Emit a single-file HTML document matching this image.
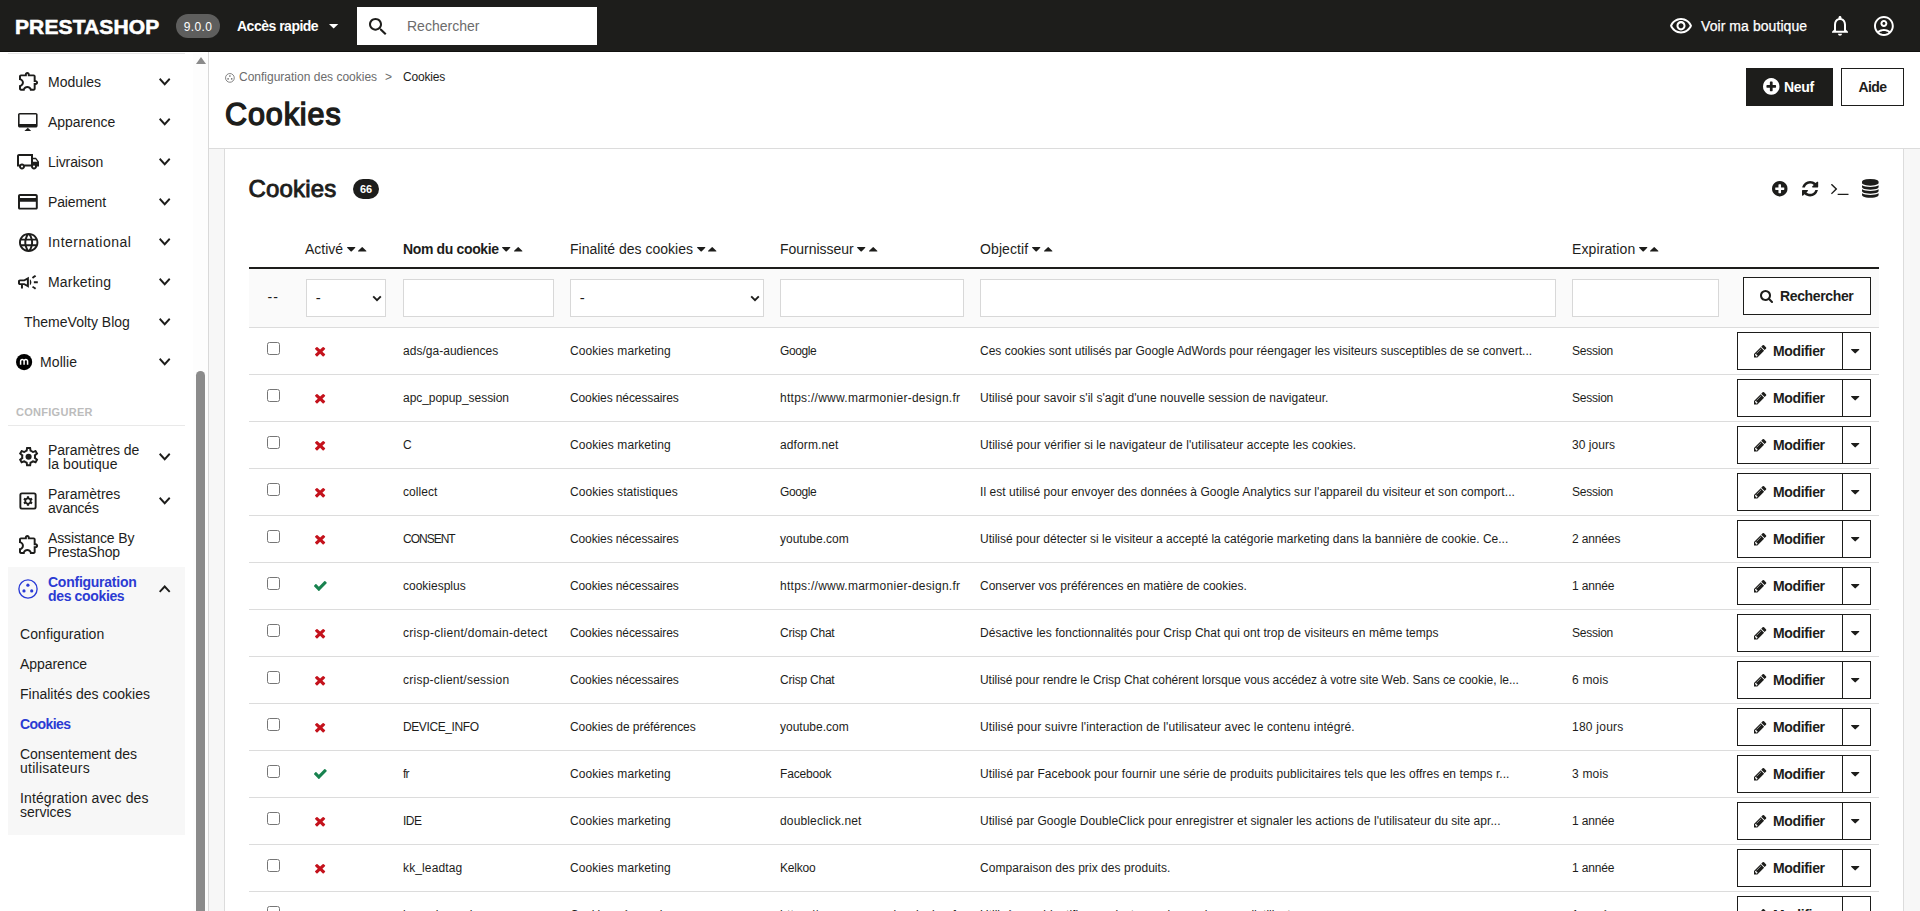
<!DOCTYPE html><html lang="fr"><head><meta charset="utf-8"><title>Cookies</title><style>*{box-sizing:border-box}
html,body{margin:0;padding:0}
body{width:1920px;height:911px;overflow:hidden;background:#f7f7f7;font-family:"Liberation Sans",sans-serif;color:#1d1d1b;position:relative}
svg{display:block}
.fa,.mi{overflow:visible}
svg.ic{position:absolute;overflow:visible}
#hdr{position:absolute;left:0;top:0;width:1920px;height:52px;background:#1d1d1b;color:#fff;border-bottom:1px solid #10100e;z-index:3}
.logo{position:absolute;left:15px;top:15px;font-size:21px;line-height:24px;font-weight:bold;-webkit-text-stroke:0.6px #fff}
.ver{position:absolute;left:176px;top:14px;width:44px;height:24px;border-radius:12px;background:#5e5e5d;font-size:12px;line-height:26px;letter-spacing:0.35px;text-align:center;color:#fff}
.quick{position:absolute;left:237px;top:14px;font-size:14px;line-height:24px;font-weight:bold}
.sbox{position:absolute;left:357px;top:7px;width:240px;height:38px;background:#fff}
.sbox .ph{position:absolute;left:50px;top:7px;font-size:14px;line-height:24px;color:#6c6c6c}
.voir{position:absolute;left:1701px;top:14px;font-size:14px;line-height:24px;-webkit-text-stroke:0.25px #fff}
#side{position:absolute;left:0;top:52px;width:209px;height:859px;background:#fff;border-right:1px solid #d9d9d9}
#side svg{position:absolute}
.topline{position:absolute;left:8px;top:1px;width:177px;height:1px;background:#e6e6e6}
.nl{position:absolute;font-size:14px;line-height:14px;white-space:nowrap;color:#1d1d1b}
.nl.act{color:#2b3bd3;font-weight:bold}
.sect{position:absolute;left:16px;top:353px;font-size:11px;line-height:14px;font-weight:bold;color:#bcbcbc}
.sline{position:absolute;left:8px;top:373px;width:177px;height:1px;background:#e9e9e9}
.actbg{position:absolute;left:8px;top:515px;width:177px;height:268px;background:#f7f7f7}
.track{position:absolute;left:193px;top:1px;width:15px;height:858px;background:#fdfdfd}
.uparrow{position:absolute;left:195.500px;top:5px;width:0;height:0;border-left:5px solid transparent;border-right:5px solid transparent;border-bottom:7px solid #8b8b8b}
.thumb{position:absolute;left:196px;top:319px;width:9px;height:600px;border-radius:4.500px;background:#8b8b8b}
#phead{position:absolute;left:209px;top:52px;width:1711px;height:97px;z-index:2;background:#fff;border-bottom:1px solid #dcdcdc}
.bc1,.bcs,.bc2{position:absolute;top:18px;font-size:12px;line-height:14px;white-space:nowrap}
.bc1{left:30px;color:#6c6c6c}
.bcs{left:176px;color:#6c6c6c}
.bc2{left:194px;color:#1d1d1b}
h1{position:absolute;left:16px;top:42px;margin:0;font-size:30.5px;line-height:40px;font-weight:normal;-webkit-text-stroke:1.4px #1d1d1b}
.bneuf{position:absolute;left:1537px;top:16px;width:87px;height:38px;background:#1d1d1b;color:#fff;font-weight:bold;font-size:14px}
.bneuf>span{position:absolute;left:38px;top:11px;line-height:16px}
.baide{position:absolute;left:1632px;top:16px;width:63px;height:38px;border:1px solid #1d1d1b;background:#fff;font-weight:bold;font-size:14px;line-height:36px;text-align:center}
#card{position:absolute;left:224px;top:148px;width:1680px;height:800px;background:#fff;border-left:1px solid #dcdcdc;border-right:1px solid #dcdcdc}
#card>svg{position:absolute}
.ctitle{position:absolute;left:23.500px;top:26px;font-size:24px;line-height:30px;font-weight:normal;-webkit-text-stroke:0.9px #1d1d1b}
.cbadge{position:absolute;left:128px;top:31px;width:26px;height:20px;border-radius:10px;background:#1d1d1b;color:#fff;font-size:11px;line-height:20px;font-weight:bold;text-align:center}
.th{position:absolute;top:92px;font-size:14px;line-height:18px;white-space:nowrap}
.th.b{font-weight:bold}
.hline{position:absolute;left:24px;top:119px;width:1630px;height:2px;background:#1d1d1b}
.frow{position:absolute;left:24px;top:121px;width:1630px;height:59px;background:#fafafa;border-bottom:1px solid #dcdcdc}
.dd{position:absolute;left:42.500px;top:141px;font-size:14px;line-height:16px;letter-spacing:1.2px}
.inp{position:absolute;top:131px;height:38px;border:1px solid #d8d8d8;background:#fff;box-sizing:content-box;height:36px}
.inp .dash{position:absolute;left:8.800px;top:10px;font-size:15px;line-height:16px}
.brech{position:absolute;left:1518px;top:129px;width:128px;height:38px;border:1px solid #1d1d1b;background:#fff;font-weight:bold;font-size:14px}
.brech>span{position:absolute;left:36px;top:10px;line-height:16px}
.brech svg,.bmod svg{position:absolute}
.row{position:absolute;left:24px;width:1630px;height:47px;border-bottom:1px solid #dcdcdc}
.row>svg{position:absolute}
.cb{position:absolute;left:18px;top:14px;width:13px;height:13px;border:1px solid #767676;border-radius:2.500px;background:#fff}
.td{position:absolute;top:16px;font-size:12px;line-height:14px;white-space:nowrap}
.bmod{position:absolute;left:1488px;top:4px;width:134px;height:38px;border:1px solid #1d1d1b;background:#fff;font-weight:bold;font-size:14px}
.bmod>span{position:absolute;left:35px;top:10px;line-height:16px}
.bdiv{position:absolute;left:104px;top:0;width:1px;height:36px;background:#1d1d1b}
</style></head><body>
<div id="hdr">
<div class="logo"><span id="t1" style="letter-spacing:0.111px">PRESTASHOP</span></div>
<div class="ver"><span id="t2">9.0.0</span></div>
<div class="quick"><span id="t3" style="letter-spacing:-0.500px">Accès rapide</span></div><svg class="ic" viewBox="7 10 10 5" preserveAspectRatio="none" style="left:329.00px;top:24.00px;width:9.30px;height:4.60px"><path fill="#fff" d="M7 10l5 5 5-5z"/></svg>
<div class="sbox"><svg class="ic" viewBox="3 3 17.49 17.49" preserveAspectRatio="none" style="left:11.75px;top:10.50px;width:17.50px;height:17.00px"><path fill="#1d1d1b" d="M15.500 14h-.79l-.28-.27C15.410 12.590 16 11.110 16 9.500 16 5.910 13.090 3 9.500 3S3 5.910 3 9.500 5.910 16 9.500 16c1.610 0 3.090-.59 4.230-1.570l.27.28v.79l5 4.990L20.490 19l-4.990-5zm-6 0C7.010 14 5 11.990 5 9.500S7.010 5 9.500 5 14 7.010 14 9.500 11.990 14 9.500 14z"/></svg><span class="ph"><span id="t4">Rechercher</span></span></div>
<svg class="ic" viewBox="1 4 22 15" preserveAspectRatio="none" style="left:1670.00px;top:17.50px;width:22.00px;height:15.50px"><path fill="#fff" d="M12 6c3.790 0 7.170 2.130 8.820 5.500C19.170 14.870 15.790 17 12 17s-7.170-2.130-8.820-5.500C4.830 8.130 8.210 6 12 6m0-2C7 4 2.730 7.110 1 11.500 2.730 15.890 7 19 12 19s9.270-3.110 11-7.500C21.270 7.110 17 4 12 4zm0 5c1.380 0 2.500 1.120 2.500 2.500S13.380 14 12 14s-2.500-1.120-2.500-2.500S10.620 9 12 9m0-2c-2.480 0-4.500 2.020-4.500 4.500S9.520 16 12 16s4.500-2.020 4.500-4.500S14.480 7 12 7z"/></svg>
<div class="voir"><span id="t5" style="letter-spacing:0.067px">Voir ma boutique</span></div>
<svg class="ic" viewBox="4 2.5 16 19.5" preserveAspectRatio="none" style="left:1832.00px;top:16.00px;width:16.00px;height:19.80px"><path fill="#fff" d="M12 22c1.100 0 2-.9 2-2h-4c0 1.100.9 2 2 2zm6-6v-5c0-3.070-1.630-5.640-4.500-6.320V4c0-.83-.67-1.500-1.500-1.500s-1.500.67-1.500 1.500v.68C7.640 5.360 6 7.920 6 11v5l-2 2v1h16v-1l-2-2zm-2 1H8v-6c0-2.480 1.510-4.500 4-4.500s4 2.020 4 4.500v6z"/></svg>
<svg class="ic" viewBox="2 2 20 20" preserveAspectRatio="none" style="left:1874.20px;top:16.00px;width:19.80px;height:19.90px"><path fill="#fff" d="M12 2C6.480 2 2 6.480 2 12s4.480 10 10 10 10-4.480 10-10S17.520 2 12 2zM7.350 18.500C8.660 17.560 10.260 17 12 17s3.340.56 4.650 1.500C15.340 19.440 13.740 20 12 20s-3.340-.56-4.650-1.500zm10.790-1.380C16.450 15.800 14.320 15 12 15s-4.450.8-6.140 2.120C4.700 15.730 4 13.950 4 12c0-4.420 3.580-8 8-8s8 3.580 8 8c0 1.950-.7 3.730-1.860 5.120zM12 6c-1.930 0-3.500 1.570-3.500 3.500S10.070 13 12 13s3.500-1.570 3.500-3.500S13.930 6 12 6zm0 5c-.83 0-1.500-.67-1.500-1.500S11.170 8 12 8s1.500.67 1.500 1.500S12.830 11 12 11z"/></svg>
</div>
<div id="side"><div class="topline"></div><svg class="ic" viewBox="2 2.5 19.5 19.5" preserveAspectRatio="none" style="left:19.00px;top:20.20px;width:19.10px;height:18.80px"><path fill="#1d1d1b" d="M10.5 4.5c.28 0 .5.22.5.5v2h6v6h2c.28 0 .5.22.5.5s-.22.5-.5.5h-2v6h-2.120c-.680-1.750-2.390-3-4.380-3s-3.700 1.250-4.380 3H4v-2.120c1.750-.680 3-2.390 3-4.380 0-1.990-1.240-3.700-2.990-4.380L4 7h6V5c0-.280.220-.5.5-.5m0-2C9.120 2.500 8 3.620 8 5H4c-1.100 0-1.990.9-1.990 2v3.800h.29c1.490 0 2.700 1.210 2.700 2.700s-1.210 2.700-2.700 2.700H2V20c0 1.100.9 2 2 2h3.800v-.3c0-1.490 1.210-2.700 2.700-2.700s2.700 1.210 2.700 2.700v.3H17c1.100 0 2-.9 2-2v-4c1.380 0 2.500-1.120 2.500-2.500S20.380 11 19 11V7c0-1.100-.9-2-2-2h-4c0-1.380-1.120-2.500-2.500-2.500z"/></svg><div class="nl " style="left:48px;top:23px"><span id="t6" style="letter-spacing:0.033px">Modules</span></div><svg class="ic" viewBox="6 8.59 12 7.41" preserveAspectRatio="none" style="left:159.30px;top:25.80px;width:11.40px;height:7.80px"><path fill="#1d1d1b" d="M16.590 8.590L12 13.170 7.410 8.590 6 10l6 6 6-6z"/></svg><svg class="ic" viewBox="0 0 19.6 18" style="left:18.3px;top:60.90px;width:19.6px;height:18px"><path fill="#1d1d1b" fill-rule="evenodd" d="M1.800 0h16c1 0 1.800.8 1.800 1.800v10.900c0 1-.8 1.800-1.800 1.800h-16c-1 0-1.800-.8-1.800-1.800V1.800C0 .8.800 0 1.800 0zM1.600 1.600v9.300h16.400V1.600zM9.800 14.700l3.400 3.300h-6.800z"/></svg><div class="nl " style="left:48px;top:63px"><span id="t7" style="letter-spacing:-0.062px">Apparence</span></div><svg class="ic" viewBox="6 8.59 12 7.41" preserveAspectRatio="none" style="left:159.30px;top:65.80px;width:11.40px;height:7.80px"><path fill="#1d1d1b" d="M16.590 8.590L12 13.170 7.410 8.590 6 10l6 6 6-6z"/></svg><svg class="ic" viewBox="1 4 22 16" preserveAspectRatio="none" style="left:17.00px;top:102.30px;width:22.00px;height:15.40px"><path fill="#1d1d1b" d="M20 8h-3V4H3c-1.100 0-2 .9-2 2v11h2c0 1.660 1.340 3 3 3s3-1.340 3-3h6c0 1.660 1.340 3 3 3s3-1.340 3-3h2v-5l-3-4zm-.5 1.500l1.960 2.500H17V9.500h2.500zM6 18c-.55 0-1-.45-1-1s.45-1 1-1 1 .45 1 1-.45 1-1 1zm2.220-3c-.55-.61-1.330-1-2.220-1s-1.670.39-2.220 1H3V6h12v9H8.220zM18 18c-.55 0-1-.45-1-1s.45-1 1-1 1 .45 1 1-.45 1-1 1z"/></svg><div class="nl " style="left:48px;top:103px"><span id="t8" style="letter-spacing:-0.100px">Livraison</span></div><svg class="ic" viewBox="6 8.59 12 7.41" preserveAspectRatio="none" style="left:159.30px;top:105.80px;width:11.40px;height:7.80px"><path fill="#1d1d1b" d="M16.590 8.590L12 13.170 7.410 8.590 6 10l6 6 6-6z"/></svg><svg class="ic" viewBox="2 4 20 16" preserveAspectRatio="none" style="left:18.30px;top:142.00px;width:19.80px;height:15.60px"><path fill="#1d1d1b" d="M20 4H4c-1.110 0-1.990.89-1.990 2L2 18c0 1.110.89 2 2 2h16c1.110 0 2-.89 2-2V6c0-1.110-.89-2-2-2zm0 14H4v-6h16v6zm0-10H4V6h16v2z"/></svg><div class="nl " style="left:48px;top:143px"><span id="t9" style="letter-spacing:-0.143px">Paiement</span></div><svg class="ic" viewBox="6 8.59 12 7.41" preserveAspectRatio="none" style="left:159.30px;top:145.80px;width:11.40px;height:7.80px"><path fill="#1d1d1b" d="M16.590 8.590L12 13.170 7.410 8.590 6 10l6 6 6-6z"/></svg><svg class="ic" viewBox="2 2 20 20" preserveAspectRatio="none" style="left:18.50px;top:180.50px;width:19.40px;height:18.90px"><path fill="#1d1d1b" d="M11.990 2C6.470 2 2 6.480 2 12s4.470 10 9.990 10C17.520 22 22 17.520 22 12S17.520 2 11.990 2zm6.930 6h-2.950c-.32-1.250-.78-2.450-1.380-3.560 1.840.63 3.370 1.910 4.330 3.560zM12 4.040c.83 1.200 1.480 2.530 1.910 3.960h-3.820c.43-1.430 1.080-2.760 1.910-3.960zM4.260 14C4.100 13.360 4 12.690 4 12s.1-1.360.26-2h3.380c-.08.66-.14 1.320-.14 2 0 .68.06 1.340.14 2H4.260zm.82 2h2.950c.32 1.250.78 2.450 1.380 3.560-1.840-.63-3.370-1.900-4.330-3.560zm2.950-8H5.080c.96-1.660 2.490-2.930 4.330-3.560C8.810 5.550 8.350 6.750 8.030 8zM12 19.960c-.83-1.200-1.480-2.530-1.910-3.960h3.820c-.43 1.430-1.080 2.760-1.910 3.960zM14.340 14H9.660c-.09-.66-.16-1.320-.16-2 0-.68.07-1.350.16-2h4.680c.09.65.16 1.320.16 2 0 .68-.07 1.340-.16 2zm.25 5.560c.6-1.110 1.060-2.310 1.380-3.560h2.950c-.96 1.650-2.490 2.930-4.330 3.560zM16.360 14c.08-.66.14-1.320.14-2 0-.68-.06-1.340-.14-2h3.380c.16.64.26 1.310.26 2s-.1 1.360-.26 2h-3.380z"/></svg><div class="nl " style="left:48px;top:183px"><span id="t10" style="letter-spacing:0.479px">International</span></div><svg class="ic" viewBox="6 8.59 12 7.41" preserveAspectRatio="none" style="left:159.30px;top:185.80px;width:11.40px;height:7.80px"><path fill="#1d1d1b" d="M16.590 8.590L12 13.170 7.410 8.590 6 10l6 6 6-6z"/></svg><svg class="ic" viewBox="2 4 20 16" preserveAspectRatio="none" style="left:18.30px;top:222.70px;width:19.80px;height:14.50px"><path fill="#1d1d1b" d="M18 11c0 .67 0 1.330 0 2 1.200 0 2.760 0 4 0 0-.67 0-1.330 0-2-1.240 0-2.800 0-4 0zM16 17.610c.96.71 2.210 1.650 3.200 2.390.4-.53.8-1.070 1.200-1.600-.99-.74-2.240-1.680-3.200-2.400-.4.54-.8 1.080-1.200 1.610zM20.400 5.600c-.4-.53-.8-1.070-1.200-1.600-.99.74-2.240 1.680-3.200 2.400.4.530.8 1.070 1.200 1.600.96-.72 2.210-1.650 3.200-2.400zM4 9c-1.100 0-2 .9-2 2v2c0 1.100.9 2 2 2h1v4h2v-4h1l5 3V6L8 9H4zm5.030 1.710L11 9.530v4.940l-1.970-1.180-.48-.29H4v-2h4.550l.48-.29zM15.500 12c0-1.330-.58-2.530-1.500-3.350v6.690c.92-.81 1.500-2.010 1.500-3.340z"/></svg><div class="nl " style="left:48px;top:223px"><span id="t11" style="letter-spacing:0.188px">Marketing</span></div><svg class="ic" viewBox="6 8.59 12 7.41" preserveAspectRatio="none" style="left:159.30px;top:225.80px;width:11.40px;height:7.80px"><path fill="#1d1d1b" d="M16.590 8.590L12 13.170 7.410 8.590 6 10l6 6 6-6z"/></svg><div class="nl " style="left:24px;top:263px"><span id="t12">ThemeVolty Blog</span></div><svg class="ic" viewBox="6 8.59 12 7.41" preserveAspectRatio="none" style="left:159.30px;top:265.80px;width:11.40px;height:7.80px"><path fill="#1d1d1b" d="M16.590 8.590L12 13.170 7.410 8.590 6 10l6 6 6-6z"/></svg><svg class="ic" viewBox="0 0 16.2 16.2" style="left:15.9px;top:301.8px;width:16.2px;height:16.2px"><circle cx="8.1" cy="8.1" r="8.1" fill="#000"/><path d="M4.600 10.700V7.300a1.750 1.750 0 0 1 3.500 0V10.700M8.100 7.300a1.750 1.750 0 0 1 3.500 0V10.700" fill="none" stroke="#fff" stroke-width="1.500"/></svg><div class="nl " style="left:40px;top:303px"><span id="t13" style="letter-spacing:0.100px">Mollie</span></div><svg class="ic" viewBox="6 8.59 12 7.41" preserveAspectRatio="none" style="left:159.30px;top:305.80px;width:11.40px;height:7.80px"><path fill="#1d1d1b" d="M16.590 8.590L12 13.170 7.410 8.590 6 10l6 6 6-6z"/></svg><div class="sect"><span id="t14" style="letter-spacing:0.278px">CONFIGURER</span></div><div class="sline"></div><svg class="ic" viewBox="2.27 2 19.45 20" preserveAspectRatio="none" style="left:18.5px;top:395.10px;width:19.2px;height:19.3px"><path fill="#1d1d1b" d="M19.430 12.980c.04-.32.07-.64.07-.98 0-.34-.03-.66-.07-.98l2.110-1.650c.19-.15.24-.42.12-.64l-2-3.460c-.09-.16-.26-.25-.44-.25-.06 0-.12.010-.17.030l-2.490 1c-.52-.4-1.080-.73-1.690-.98l-.38-2.650C14.460 2.180 14.250 2 14 2h-4c-.25 0-.46.18-.49.42l-.38 2.650c-.61.25-1.170.59-1.690.98l-2.490-1c-.06-.02-.12-.03-.18-.03-.17 0-.34.09-.43.25l-2 3.460c-.13.22-.07.49.12.64l2.110 1.650c-.04.32-.07.65-.07.98 0 .33.03.66.07.98l-2.110 1.650c-.19.15-.24.42-.12.64l2 3.460c.09.16.26.25.44.25.06 0 .12-.01.17-.03l2.490-1c.52.4 1.080.73 1.690.98l.38 2.650c.03.24.24.42.49.42h4c.25 0 .46-.18.49-.42l.38-2.650c.61-.25 1.170-.59 1.690-.98l2.490 1c.06.02.12.03.18.03.17 0 .34-.09.43-.25l2-3.460c.12-.22.07-.49-.12-.64l-2.110-1.650zm-1.980-1.710c.04.31.05.52.05.73 0 .21-.02.43-.05.73l-.14 1.130.89.7 1.080.84-.7 1.210-1.270-.51-1.040-.42-.9.68c-.43.32-.84.56-1.250.73l-1.060.43-.16 1.130-.2 1.350h-1.400l-.19-1.350-.16-1.130-1.060-.43c-.43-.18-.83-.41-1.230-.71l-.91-.7-1.060.43-1.270.51-.7-1.210 1.080-.84.89-.7-.14-1.130c-.03-.31-.05-.54-.05-.74s.02-.43.05-.73l.14-1.130-.89-.7-1.080-.84.7-1.210 1.270.51 1.040.42.9-.68c.43-.32.84-.56 1.250-.73l1.060-.43.16-1.130.2-1.350h1.390l.19 1.350.16 1.130 1.060.43c.43.18.83.41 1.230.71l.91.7 1.060-.43 1.270-.51.7 1.210-1.070.85-.89.7.14 1.130z"/><circle cx="12" cy="12" r="3.1" fill="#1d1d1b"/></svg><div class="nl " style="left:48px;top:391px"><span id="t15" style="letter-spacing:-0.042px">Paramètres de</span><br><span id="t16" style="letter-spacing:0.100px">la boutique</span></div><svg class="ic" viewBox="6 8.59 12 7.41" preserveAspectRatio="none" style="left:159.30px;top:400.80px;width:11.40px;height:7.80px"><path fill="#1d1d1b" d="M16.590 8.590L12 13.170 7.410 8.590 6 10l6 6 6-6z"/></svg><svg class="ic" viewBox="0 0 24 24" style="left:15.75px;top:436.75px;width:24px;height:24px"><rect x="4.35" y="4.35" width="15.3" height="15.3" rx="1.6" fill="none" stroke="#1d1d1b" stroke-width="1.9"/><path fill="#1d1d1b" transform="translate(-0.2,0)" d="M15.700 12.600c.03-.2.040-.4.040-.6s-.01-.4-.04-.6l1.100-.86-1.050-1.820-1.300.52c-.31-.24-.65-.44-1.020-.59L13.250 7.300h-2.100l-.2 1.380c-.37.150-.71.350-1.020.59l-1.300-.52-1.050 1.820 1.100.86c-.03.2-.04.4-.04.600s.01.400.04.600l-1.100.86 1.050 1.820 1.300-.52c.31.240.65.440 1.020.59l.2 1.380h2.100l.2-1.380c.37-.15.71-.35 1.020-.59l1.300.52 1.050-1.820-1.100-.86zM12.200 13.800c-1 0-1.800-.8-1.800-1.800s.8-1.800 1.800-1.800 1.800.8 1.800 1.800-.8 1.800-1.800 1.800z"/></svg><div class="nl " style="left:48px;top:435px"><span id="t17">Paramètres</span><br><span id="t18" style="letter-spacing:-0.200px">avancés</span></div><svg class="ic" viewBox="6 8.59 12 7.41" preserveAspectRatio="none" style="left:159.30px;top:444.80px;width:11.40px;height:7.80px"><path fill="#1d1d1b" d="M16.590 8.590L12 13.170 7.410 8.590 6 10l6 6 6-6z"/></svg><svg class="ic" viewBox="2 2.5 19.5 19.5" preserveAspectRatio="none" style="left:19.00px;top:483.10px;width:19.10px;height:18.90px"><path fill="#1d1d1b" d="M10.5 4.5c.28 0 .5.22.5.5v2h6v6h2c.28 0 .5.22.5.5s-.22.5-.5.5h-2v6h-2.120c-.680-1.750-2.390-3-4.380-3s-3.700 1.250-4.380 3H4v-2.120c1.750-.680 3-2.390 3-4.380 0-1.990-1.240-3.700-2.990-4.380L4 7h6V5c0-.280.220-.5.5-.5m0-2C9.120 2.500 8 3.620 8 5H4c-1.100 0-1.990.9-1.990 2v3.800h.29c1.490 0 2.700 1.210 2.700 2.700s-1.210 2.700-2.700 2.700H2V20c0 1.100.9 2 2 2h3.800v-.3c0-1.490 1.210-2.700 2.700-2.700s2.700 1.210 2.700 2.700v.3H17c1.100 0 2-.9 2-2v-4c1.380 0 2.500-1.120 2.500-2.500S20.380 11 19 11V7c0-1.100-.9-2-2-2h-4c0-1.380-1.120-2.500-2.500-2.500z"/></svg><div class="nl " style="left:48px;top:479px"><span id="t19" style="letter-spacing:-0.117px">Assistance By</span><br><span id="t20" style="letter-spacing:-0.111px">PrestaShop</span></div><div class="actbg"></div><svg class="ic" viewBox="0 0 20 20" style="left:18.3px;top:526.80px;width:20px;height:20px"><circle cx="10" cy="10" r="9.100" fill="none" stroke="#2b3bd6" stroke-width="1.350"/><circle cx="9.900" cy="6.200" r="1.600" fill="#2b3bd6"/><circle cx="6.000" cy="11.900" r="1.600" fill="#2b3bd6"/><circle cx="13.700" cy="11.900" r="1.600" fill="#2b3bd6"/></svg><div class="nl act" style="left:48px;top:523px"><span id="t21" style="letter-spacing:-0.250px">Configuration</span><br><span id="t22" style="letter-spacing:-0.350px">des cookies</span></div><svg class="ic" viewBox="6 8 12 7.41" preserveAspectRatio="none" style="left:159.30px;top:533.40px;width:11.40px;height:7.60px"><path fill="#1d1d1b" d="M12 8l-6 6 1.410 1.410L12 10.830l4.590 4.580L18 14z"/></svg><div class="nl sub " style="left:20px;top:575px"><span id="t23" style="letter-spacing:0.083px">Configuration</span></div><div class="nl sub " style="left:20px;top:605px"><span id="t24" style="letter-spacing:-0.075px">Apparence</span></div><div class="nl sub " style="left:20px;top:635px"><span id="t25">Finalités des cookies</span></div><div class="nl sub act" style="left:20px;top:665px"><span id="t26" style="letter-spacing:-0.583px">Cookies</span></div><div class="nl sub " style="left:20px;top:695px"><span id="t27" style="letter-spacing:-0.033px">Consentement des</span><br><span id="t28" style="letter-spacing:0.255px">utilisateurs</span></div><div class="nl sub " style="left:20px;top:739px"><span id="t29" style="letter-spacing:0.126px">Intégration avec des</span><br><span id="t30">services</span></div><div class="track"></div><div class="uparrow"></div><div class="thumb"></div></div>
<div id="phead">
<svg class="ic" viewBox="0 0 20 20" style="left:16px;top:21.200px;width:9.800px;height:9.800px"><circle cx="10" cy="10" r="8.900" fill="none" stroke="#6c6c6c" stroke-width="1.700"/><circle cx="10" cy="6.300" r="1.700" fill="#6c6c6c"/><circle cx="6.300" cy="12" r="1.700" fill="#6c6c6c"/><circle cx="13.700" cy="12" r="1.700" fill="#6c6c6c"/></svg>
<div class="bc1"><span id="t31">Configuration des cookies</span></div><div class="bcs">&gt;</div><div class="bc2"><span id="t32" style="letter-spacing:-0.167px">Cookies</span></div>
<h1><span id="t33" style="letter-spacing:0.917px">Cookies</span></h1>
<div class="bneuf"><svg class="ic" viewBox="128 128 1536 1536" preserveAspectRatio="none" style="left:17.40px;top:10.10px;width:16.50px;height:16.80px"><path fill="#fff" d="M1344 960v-128q0-26-19-45t-45-19h-256v-256q0-26-19-45t-45-19h-128q-26 0-45 19t-19 45v256h-256q-26 0-45 19t-19 45v128q0 26 19 45t45 19h256v256q0 26 19 45t45 19h128q26 0 45-19t19-45v-256h256q26 0 45-19t19-45zm320-64q0 209-103 385.500t-279.500 279.500-385.500 103-385.500-103-279.500-279.500-103-385.500 103-385.500 279.500-279.500 385.500-103 385.500 103 279.500 279.500 103 385.500z"/></svg><span><span id="t34" style="letter-spacing:-0.333px">Neuf</span></span></div>
<div class="baide"><span id="t35" style="letter-spacing:-0.600px">Aide</span></div>
</div>
<div id="card"><div class="ctitle"><span id="t36" style="letter-spacing:0.167px">Cookies</span></div><div class="cbadge">66</div><svg class="ic" viewBox="128 128 1536 1536" preserveAspectRatio="none" style="left:1547.25px;top:32.60px;width:15.50px;height:15.40px"><path fill="#1d1d1b" d="M1344 960v-128q0-26-19-45t-45-19h-256v-256q0-26-19-45t-45-19h-128q-26 0-45 19t-19 45v256h-256q-26 0-45 19t-19 45v128q0 26 19 45t45 19h256v256q0 26 19 45t45 19h128q26 0 45-19t19-45v-256h256q26 0 45-19t19-45zm320-64q0 209-103 385.500t-279.500 279.500-385.500 103-385.500-103-279.500-279.500-103-385.500 103-385.500 279.500-279.500 385.500-103 385.500 103 279.500 279.500 103 385.500z"/></svg><svg class="ic" viewBox="128 128 1536 1536" preserveAspectRatio="none" style="left:1576.90px;top:32.60px;width:16.20px;height:15.40px"><path fill="#1d1d1b" d="M1639 1056q0 5-1 7-64 268-268 434.500t-478 166.500q-146 0-282.500-55t-243.500-157l-129 129q-19 19-45 19t-45-19-19-45v-448q0-26 19-45t45-19h448q26 0 45 19t19 45-19 45l-137 137q71 66 161 102t187 36q134 0 250-65t186-179q11-17 53-117 8-23 30-23h192q13 0 22.500 9.500t9.500 22.500zm25-800v448q0 26-19 45t-45 19h-448q-26 0-45-19t-19-45 19-45l138-138q-148-137-349-137-134 0-250 65t-186 179q-11 17-53 117-8 23-30 23h-199q-13 0-22.500-9.500t-9.500-22.500v-7q65-268 270-434.500t480-166.500q146 0 284 55.500t245 156.500l130-129q19-19 45-19t45 19 19 45z"/></svg><svg class="ic" viewBox="77 461 1651 1075" preserveAspectRatio="none" style="left:1606.25px;top:35.75px;width:17.50px;height:11.00px"><path fill="#1d1d1b" d="M649 983l-466 466q-10 10-23 10t-23-10l-50-50q-10-10-10-23t10-23l393-393-393-393q-10-10-10-23t10-23l50-50q10-10 23-10t23 10l466 466q10 10 10 23t-10 23zm1079 457v64q0 14-9 23t-23 9h-960q-14 0-23-9t-9-23v-64q0-14 9-23t23-9h960q14 0 23 9t9 23z"/></svg><svg class="ic" viewBox="128 0 1536 1792" preserveAspectRatio="none" style="left:1636.50px;top:31.00px;width:16.60px;height:18.75px"><path fill="#1d1d1b" d="M896 768q237 0 443-43t325-127v170q0 69-103 128t-280 93.500-385 34.500-385-34.500-280-93.500-103-128v-170q119 84 325 127t443 43zm0 768q237 0 443-43t325-127v170q0 69-103 128t-280 93.500-385 34.500-385-34.500-280-93.500-103-128v-170q119 84 325 127t443 43zm0-384q237 0 443-43t325-127v170q0 69-103 128t-280 93.500-385 34.500-385-34.500-280-93.500-103-128v-170q119 84 325 127t443 43zm0-1152q208 0 385 34.500t280 93.500 103 128v128q0 69-103 128t-280 93.500-385 34.500-385-34.500-280-93.500-103-128v-128q0-69 103-128t280-93.500 385-34.500z"/></svg><div class="th" style="left:80px"><span id="t37">Activé</span></div><svg class="ic" viewBox="384 640 1024 576" preserveAspectRatio="none" style="left:121.60px;top:99.30px;width:8.40px;height:4.60px"><path fill="#1d1d1b" d="M1408 704q0 26-19 45l-448 448q-19 19-45 19t-45-19l-448-448q-19-19-19-45t19-45 45-19h896q26 0 45 19t19 45z"/></svg><svg class="ic" viewBox="384 704 1024 576" preserveAspectRatio="none" style="left:132.80px;top:99.40px;width:8.40px;height:4.60px"><path fill="#1d1d1b" d="M1408 1216q0 26-19 45t-45 19h-896q-26 0-45-19t-19-45 19-45l448-448q19-19 45-19t45 19l448 448q19 19 19 45z"/></svg><div class="th b" style="left:178px"><span id="t38" style="letter-spacing:-0.354px">Nom du cookie</span></div><svg class="ic" viewBox="384 640 1024 576" preserveAspectRatio="none" style="left:277.35px;top:99.30px;width:8.40px;height:4.60px"><path fill="#1d1d1b" d="M1408 704q0 26-19 45l-448 448q-19 19-45 19t-45-19l-448-448q-19-19-19-45t19-45 45-19h896q26 0 45 19t19 45z"/></svg><svg class="ic" viewBox="384 704 1024 576" preserveAspectRatio="none" style="left:288.55px;top:99.40px;width:8.40px;height:4.60px"><path fill="#1d1d1b" d="M1408 1216q0 26-19 45t-45 19h-896q-26 0-45-19t-19-45 19-45l448-448q19-19 45-19t45 19l448 448q19 19 19 45z"/></svg><div class="th" style="left:345px"><span id="t39">Finalité des cookies</span></div><svg class="ic" viewBox="384 640 1024 576" preserveAspectRatio="none" style="left:471.60px;top:99.30px;width:8.40px;height:4.60px"><path fill="#1d1d1b" d="M1408 704q0 26-19 45l-448 448q-19 19-45 19t-45-19l-448-448q-19-19-19-45t19-45 45-19h896q26 0 45 19t19 45z"/></svg><svg class="ic" viewBox="384 704 1024 576" preserveAspectRatio="none" style="left:482.80px;top:99.40px;width:8.40px;height:4.60px"><path fill="#1d1d1b" d="M1408 1216q0 26-19 45t-45 19h-896q-26 0-45-19t-19-45 19-45l448-448q19-19 45-19t45 19l448 448q19 19 19 45z"/></svg><div class="th" style="left:555px"><span id="t40" style="letter-spacing:-0.025px">Fournisseur</span></div><svg class="ic" viewBox="384 640 1024 576" preserveAspectRatio="none" style="left:632.35px;top:99.30px;width:8.40px;height:4.60px"><path fill="#1d1d1b" d="M1408 704q0 26-19 45l-448 448q-19 19-45 19t-45-19l-448-448q-19-19-19-45t19-45 45-19h896q26 0 45 19t19 45z"/></svg><svg class="ic" viewBox="384 704 1024 576" preserveAspectRatio="none" style="left:643.55px;top:99.40px;width:8.40px;height:4.60px"><path fill="#1d1d1b" d="M1408 1216q0 26-19 45t-45 19h-896q-26 0-45-19t-19-45 19-45l448-448q19-19 45-19t45 19l448 448q19 19 19 45z"/></svg><div class="th" style="left:755px"><span id="t41" style="letter-spacing:0.107px">Objectif</span></div><svg class="ic" viewBox="384 640 1024 576" preserveAspectRatio="none" style="left:807.35px;top:99.30px;width:8.40px;height:4.60px"><path fill="#1d1d1b" d="M1408 704q0 26-19 45l-448 448q-19 19-45 19t-45-19l-448-448q-19-19-19-45t19-45 45-19h896q26 0 45 19t19 45z"/></svg><svg class="ic" viewBox="384 704 1024 576" preserveAspectRatio="none" style="left:818.55px;top:99.40px;width:8.40px;height:4.60px"><path fill="#1d1d1b" d="M1408 1216q0 26-19 45t-45 19h-896q-26 0-45-19t-19-45 19-45l448-448q19-19 45-19t45 19l448 448q19 19 19 45z"/></svg><div class="th" style="left:1347px"><span id="t42" style="letter-spacing:0.111px">Expiration</span></div><svg class="ic" viewBox="384 640 1024 576" preserveAspectRatio="none" style="left:1413.60px;top:99.30px;width:8.40px;height:4.60px"><path fill="#1d1d1b" d="M1408 704q0 26-19 45l-448 448q-19 19-45 19t-45-19l-448-448q-19-19-19-45t19-45 45-19h896q26 0 45 19t19 45z"/></svg><svg class="ic" viewBox="384 704 1024 576" preserveAspectRatio="none" style="left:1424.80px;top:99.40px;width:8.40px;height:4.60px"><path fill="#1d1d1b" d="M1408 1216q0 26-19 45t-45 19h-896q-26 0-45-19t-19-45 19-45l448-448q19-19 45-19t45 19l448 448q19 19 19 45z"/></svg><div class="hline"></div><div class="frow"></div><div class="dd">--</div><div class="inp" style="left:81px;width:78px"><span class="dash">-</span><svg class="ic" viewBox="0 0 10 7" style="right:3.500px;top:14.800px;width:10px;height:7px"><path d="M1.200 1.400L5 5.200l3.800-3.800" fill="none" stroke="#1d1d1b" stroke-width="1.900"/></svg></div><div class="inp" style="left:178px;width:149px"></div><div class="inp" style="left:345px;width:192px"><span class="dash">-</span><svg class="ic" viewBox="0 0 10 7" style="right:3.500px;top:14.800px;width:10px;height:7px"><path d="M1.200 1.400L5 5.200l3.800-3.800" fill="none" stroke="#1d1d1b" stroke-width="1.900"/></svg></div><div class="inp" style="left:555px;width:182px"></div><div class="inp" style="left:755px;width:574px"></div><div class="inp" style="left:1347px;width:145px"></div><div class="brech"><svg class="ic" viewBox="64 128 1664 1664" preserveAspectRatio="none" style="left:15.75px;top:12.00px;width:13.00px;height:13.00px"><path fill="#1d1d1b" d="M1216 832q0-185-131.500-316.500t-316.500-131.500-316.500 131.500-131.500 316.500 131.500 316.500 316.500 131.500 316.500-131.500 131.500-316.500zm512 832q0 52-38 90t-90 38q-54 0-90-38l-343-342q-179 124-399 124-143 0-273.500-55.500t-225-150-150-225-55.500-273.500 55.500-273.500 150-225 225-150 273.500-55.500 273.500 55.500 225 150 150 225 55.500 273.500q0 220-124 399l343 343q37 37 37 90z"/></svg><span><span id="t43" style="letter-spacing:-0.361px">Rechercher</span></span></div><div class="row" style="top:180px"><div class="cb"></div><svg class="ic" viewBox="302 366 1188 1188" preserveAspectRatio="none" style="left:65.90px;top:18.80px;width:10.20px;height:9.40px"><path fill="#c4121c" d="M1490 1322q0 40-28 68l-136 136q-28 28-68 28t-68-28l-294-294-294 294q-28 28-68 28t-68-28l-136-136q-28-28-28-68t28-68l294-294-294-294q-28-28-28-68t28-68l136-136q28-28 68-28t68 28l294 294 294-294q28-28 68-28t68 28l136 136q28 28 28 68t-28 68l-294 294 294 294q28 28 28 68z"/></svg>
<div class="td" style="left:154px"><span id="t44" style="letter-spacing:0.027px">ads/ga-audiences</span></div><div class="td" style="left:321px"><span id="t45" style="letter-spacing:0.081px">Cookies marketing</span></div><div class="td" style="left:531px"><span id="t46" style="letter-spacing:-0.400px">Google</span></div><div class="td" style="left:731px"><span id="t47">Ces cookies sont utilisés par Google AdWords pour réengager les visiteurs susceptibles de se convert...</span></div><div class="td" style="left:1323px"><span id="t48" style="letter-spacing:-0.233px">Session</span></div>
<div class="bmod"><svg class="ic" viewBox="128 149 1515 1515" preserveAspectRatio="none" style="left:15.75px;top:11.60px;width:12.25px;height:12.50px"><path fill="#1d1d1b" d="M491 1536l91-91-235-235-91 91v107h128v128h107zm523-928q0-22-22-22-10 0-17 7l-542 542q-7 7-7 17 0 22 22 22 10 0 17-7l542-542q7-7 7-17zm-54-192l416 416-832 832h-416v-416zm683 96q0 53-37 90l-166 166-416-416 166-165q36-38 90-38 53 0 91 38l235 234q37 39 37 91z"/></svg><span><span id="t49" style="letter-spacing:-0.343px">Modifier</span></span><div class="bdiv"></div><svg class="ic" viewBox="384 640 1024 576" preserveAspectRatio="none" style="left:112.60px;top:16.00px;width:8.40px;height:4.40px"><path fill="#1d1d1b" d="M1408 704q0 26-19 45l-448 448q-19 19-45 19t-45-19l-448-448q-19-19-19-45t19-45 45-19h896q26 0 45 19t19 45z"/></svg></div></div><div class="row" style="top:227px"><div class="cb"></div><svg class="ic" viewBox="302 366 1188 1188" preserveAspectRatio="none" style="left:65.90px;top:18.80px;width:10.20px;height:9.40px"><path fill="#c4121c" d="M1490 1322q0 40-28 68l-136 136q-28 28-68 28t-68-28l-294-294-294 294q-28 28-68 28t-68-28l-136-136q-28-28-28-68t28-68l294-294-294-294q-28-28-28-68t28-68l136-136q28-28 68-28t68 28l294 294 294-294q28-28 68-28t68 28l136 136q28 28 28 68t-28 68l-294 294 294 294q28 28 28 68z"/></svg>
<div class="td" style="left:154px"><span id="t50" style="letter-spacing:-0.044px">apc_popup_session</span></div><div class="td" style="left:321px"><span id="t51" style="letter-spacing:-0.111px">Cookies nécessaires</span></div><div class="td" style="left:531px"><span id="t52" style="letter-spacing:0.267px">https://www.marmonier-design.fr</span></div><div class="td" style="left:731px"><span id="t53" style="letter-spacing:0.029px">Utilisé pour savoir s'il s'agit d'une nouvelle session de navigateur.</span></div><div class="td" style="left:1323px"><span id="t54" style="letter-spacing:-0.233px">Session</span></div>
<div class="bmod"><svg class="ic" viewBox="128 149 1515 1515" preserveAspectRatio="none" style="left:15.75px;top:11.60px;width:12.25px;height:12.50px"><path fill="#1d1d1b" d="M491 1536l91-91-235-235-91 91v107h128v128h107zm523-928q0-22-22-22-10 0-17 7l-542 542q-7 7-7 17 0 22 22 22 10 0 17-7l542-542q7-7 7-17zm-54-192l416 416-832 832h-416v-416zm683 96q0 53-37 90l-166 166-416-416 166-165q36-38 90-38 53 0 91 38l235 234q37 39 37 91z"/></svg><span><span id="t55" style="letter-spacing:-0.343px">Modifier</span></span><div class="bdiv"></div><svg class="ic" viewBox="384 640 1024 576" preserveAspectRatio="none" style="left:112.60px;top:16.00px;width:8.40px;height:4.40px"><path fill="#1d1d1b" d="M1408 704q0 26-19 45l-448 448q-19 19-45 19t-45-19l-448-448q-19-19-19-45t19-45 45-19h896q26 0 45 19t19 45z"/></svg></div></div><div class="row" style="top:274px"><div class="cb"></div><svg class="ic" viewBox="302 366 1188 1188" preserveAspectRatio="none" style="left:65.90px;top:18.80px;width:10.20px;height:9.40px"><path fill="#c4121c" d="M1490 1322q0 40-28 68l-136 136q-28 28-68 28t-68-28l-294-294-294 294q-28 28-68 28t-68-28l-136-136q-28-28-28-68t28-68l294-294-294-294q-28-28-28-68t28-68l136-136q28-28 68-28t68 28l294 294 294-294q28-28 68-28t68 28l136 136q28 28 28 68t-28 68l-294 294 294 294q28 28 28 68z"/></svg>
<div class="td" style="left:154px"><span id="t56">C</span></div><div class="td" style="left:321px"><span id="t57" style="letter-spacing:0.081px">Cookies marketing</span></div><div class="td" style="left:531px"><span id="t58" style="letter-spacing:0.111px">adform.net</span></div><div class="td" style="left:731px"><span id="t59" style="letter-spacing:0.067px">Utilisé pour vérifier si le navigateur de l'utilisateur accepte les cookies.</span></div><div class="td" style="left:1323px"><span id="t60" style="letter-spacing:0.057px">30 jours</span></div>
<div class="bmod"><svg class="ic" viewBox="128 149 1515 1515" preserveAspectRatio="none" style="left:15.75px;top:11.60px;width:12.25px;height:12.50px"><path fill="#1d1d1b" d="M491 1536l91-91-235-235-91 91v107h128v128h107zm523-928q0-22-22-22-10 0-17 7l-542 542q-7 7-7 17 0 22 22 22 10 0 17-7l542-542q7-7 7-17zm-54-192l416 416-832 832h-416v-416zm683 96q0 53-37 90l-166 166-416-416 166-165q36-38 90-38 53 0 91 38l235 234q37 39 37 91z"/></svg><span><span id="t61" style="letter-spacing:-0.343px">Modifier</span></span><div class="bdiv"></div><svg class="ic" viewBox="384 640 1024 576" preserveAspectRatio="none" style="left:112.60px;top:16.00px;width:8.40px;height:4.40px"><path fill="#1d1d1b" d="M1408 704q0 26-19 45l-448 448q-19 19-45 19t-45-19l-448-448q-19-19-19-45t19-45 45-19h896q26 0 45 19t19 45z"/></svg></div></div><div class="row" style="top:321px"><div class="cb"></div><svg class="ic" viewBox="302 366 1188 1188" preserveAspectRatio="none" style="left:65.90px;top:18.80px;width:10.20px;height:9.40px"><path fill="#c4121c" d="M1490 1322q0 40-28 68l-136 136q-28 28-68 28t-68-28l-294-294-294 294q-28 28-68 28t-68-28l-136-136q-28-28-28-68t28-68l294-294-294-294q-28-28-28-68t28-68l136-136q28-28 68-28t68 28l294 294 294-294q28-28 68-28t68 28l136 136q28 28 28 68t-28 68l-294 294 294 294q28 28 28 68z"/></svg>
<div class="td" style="left:154px"><span id="t62" style="letter-spacing:0.067px">collect</span></div><div class="td" style="left:321px"><span id="t63" style="letter-spacing:0.053px">Cookies statistiques</span></div><div class="td" style="left:531px"><span id="t64" style="letter-spacing:-0.400px">Google</span></div><div class="td" style="left:731px"><span id="t65" style="letter-spacing:0.055px">Il est utilisé pour envoyer des données à Google Analytics sur l'appareil du visiteur et son comport...</span></div><div class="td" style="left:1323px"><span id="t66" style="letter-spacing:-0.233px">Session</span></div>
<div class="bmod"><svg class="ic" viewBox="128 149 1515 1515" preserveAspectRatio="none" style="left:15.75px;top:11.60px;width:12.25px;height:12.50px"><path fill="#1d1d1b" d="M491 1536l91-91-235-235-91 91v107h128v128h107zm523-928q0-22-22-22-10 0-17 7l-542 542q-7 7-7 17 0 22 22 22 10 0 17-7l542-542q7-7 7-17zm-54-192l416 416-832 832h-416v-416zm683 96q0 53-37 90l-166 166-416-416 166-165q36-38 90-38 53 0 91 38l235 234q37 39 37 91z"/></svg><span><span id="t67" style="letter-spacing:-0.343px">Modifier</span></span><div class="bdiv"></div><svg class="ic" viewBox="384 640 1024 576" preserveAspectRatio="none" style="left:112.60px;top:16.00px;width:8.40px;height:4.40px"><path fill="#1d1d1b" d="M1408 704q0 26-19 45l-448 448q-19 19-45 19t-45-19l-448-448q-19-19-19-45t19-45 45-19h896q26 0 45 19t19 45z"/></svg></div></div><div class="row" style="top:368px"><div class="cb"></div><svg class="ic" viewBox="302 366 1188 1188" preserveAspectRatio="none" style="left:65.90px;top:18.80px;width:10.20px;height:9.40px"><path fill="#c4121c" d="M1490 1322q0 40-28 68l-136 136q-28 28-68 28t-68-28l-294-294-294 294q-28 28-68 28t-68-28l-136-136q-28-28-28-68t28-68l294-294-294-294q-28-28-28-68t28-68l136-136q28-28 68-28t68 28l294 294 294-294q28-28 68-28t68 28l136 136q28 28 28 68t-28 68l-294 294 294 294q28 28 28 68z"/></svg>
<div class="td" style="left:154px"><span id="t68" style="letter-spacing:-1.000px">CONSENT</span></div><div class="td" style="left:321px"><span id="t69" style="letter-spacing:-0.111px">Cookies nécessaires</span></div><div class="td" style="left:531px"><span id="t70">youtube.com</span></div><div class="td" style="left:731px"><span id="t71">Utilisé pour détecter si le visiteur a accepté la catégorie marketing dans la bannière de cookie. Ce...</span></div><div class="td" style="left:1323px"><span id="t72" style="letter-spacing:-0.143px">2 années</span></div>
<div class="bmod"><svg class="ic" viewBox="128 149 1515 1515" preserveAspectRatio="none" style="left:15.75px;top:11.60px;width:12.25px;height:12.50px"><path fill="#1d1d1b" d="M491 1536l91-91-235-235-91 91v107h128v128h107zm523-928q0-22-22-22-10 0-17 7l-542 542q-7 7-7 17 0 22 22 22 10 0 17-7l542-542q7-7 7-17zm-54-192l416 416-832 832h-416v-416zm683 96q0 53-37 90l-166 166-416-416 166-165q36-38 90-38 53 0 91 38l235 234q37 39 37 91z"/></svg><span><span id="t73" style="letter-spacing:-0.343px">Modifier</span></span><div class="bdiv"></div><svg class="ic" viewBox="384 640 1024 576" preserveAspectRatio="none" style="left:112.60px;top:16.00px;width:8.40px;height:4.40px"><path fill="#1d1d1b" d="M1408 704q0 26-19 45l-448 448q-19 19-45 19t-45-19l-448-448q-19-19-19-45t19-45 45-19h896q26 0 45 19t19 45z"/></svg></div></div><div class="row" style="top:415px"><div class="cb"></div><svg class="ic" viewBox="121 334 1550 1188" preserveAspectRatio="none" style="left:64.60px;top:18.20px;width:12.70px;height:9.90px"><path fill="#18824f" d="M1671 566q0 40-28 68l-724 724-136 136q-28 28-68 28t-68-28l-136-136-362-362q-28-28-28-68t28-68l136-136q28-28 68-28t68 28l294 295 656-657q28-28 68-28t68 28l136 136q28 28 28 68z"/></svg>
<div class="td" style="left:154px"><span id="t74">cookiesplus</span></div><div class="td" style="left:321px"><span id="t75" style="letter-spacing:-0.111px">Cookies nécessaires</span></div><div class="td" style="left:531px"><span id="t76" style="letter-spacing:0.267px">https://www.marmonier-design.fr</span></div><div class="td" style="left:731px"><span id="t77" style="letter-spacing:-0.028px">Conserver vos préférences en matière de cookies.</span></div><div class="td" style="left:1323px"><span id="t78" style="letter-spacing:-0.167px">1 année</span></div>
<div class="bmod"><svg class="ic" viewBox="128 149 1515 1515" preserveAspectRatio="none" style="left:15.75px;top:11.60px;width:12.25px;height:12.50px"><path fill="#1d1d1b" d="M491 1536l91-91-235-235-91 91v107h128v128h107zm523-928q0-22-22-22-10 0-17 7l-542 542q-7 7-7 17 0 22 22 22 10 0 17-7l542-542q7-7 7-17zm-54-192l416 416-832 832h-416v-416zm683 96q0 53-37 90l-166 166-416-416 166-165q36-38 90-38 53 0 91 38l235 234q37 39 37 91z"/></svg><span><span id="t79" style="letter-spacing:-0.343px">Modifier</span></span><div class="bdiv"></div><svg class="ic" viewBox="384 640 1024 576" preserveAspectRatio="none" style="left:112.60px;top:16.00px;width:8.40px;height:4.40px"><path fill="#1d1d1b" d="M1408 704q0 26-19 45l-448 448q-19 19-45 19t-45-19l-448-448q-19-19-19-45t19-45 45-19h896q26 0 45 19t19 45z"/></svg></div></div><div class="row" style="top:462px"><div class="cb"></div><svg class="ic" viewBox="302 366 1188 1188" preserveAspectRatio="none" style="left:65.90px;top:18.80px;width:10.20px;height:9.40px"><path fill="#c4121c" d="M1490 1322q0 40-28 68l-136 136q-28 28-68 28t-68-28l-294-294-294 294q-28 28-68 28t-68-28l-136-136q-28-28-28-68t28-68l294-294-294-294q-28-28-28-68t28-68l136-136q28-28 68-28t68 28l294 294 294-294q28-28 68-28t68 28l136 136q28 28 28 68t-28 68l-294 294 294 294q28 28 28 68z"/></svg>
<div class="td" style="left:154px"><span id="t80" style="letter-spacing:0.308px">crisp-client/domain-detect</span></div><div class="td" style="left:321px"><span id="t81" style="letter-spacing:-0.111px">Cookies nécessaires</span></div><div class="td" style="left:531px"><span id="t82" style="letter-spacing:-0.222px">Crisp Chat</span></div><div class="td" style="left:731px"><span id="t83" style="letter-spacing:0.036px">Désactive les fonctionnalités pour Crisp Chat qui ont trop de visiteurs en même temps</span></div><div class="td" style="left:1323px"><span id="t84" style="letter-spacing:-0.233px">Session</span></div>
<div class="bmod"><svg class="ic" viewBox="128 149 1515 1515" preserveAspectRatio="none" style="left:15.75px;top:11.60px;width:12.25px;height:12.50px"><path fill="#1d1d1b" d="M491 1536l91-91-235-235-91 91v107h128v128h107zm523-928q0-22-22-22-10 0-17 7l-542 542q-7 7-7 17 0 22 22 22 10 0 17-7l542-542q7-7 7-17zm-54-192l416 416-832 832h-416v-416zm683 96q0 53-37 90l-166 166-416-416 166-165q36-38 90-38 53 0 91 38l235 234q37 39 37 91z"/></svg><span><span id="t85" style="letter-spacing:-0.343px">Modifier</span></span><div class="bdiv"></div><svg class="ic" viewBox="384 640 1024 576" preserveAspectRatio="none" style="left:112.60px;top:16.00px;width:8.40px;height:4.40px"><path fill="#1d1d1b" d="M1408 704q0 26-19 45l-448 448q-19 19-45 19t-45-19l-448-448q-19-19-19-45t19-45 45-19h896q26 0 45 19t19 45z"/></svg></div></div><div class="row" style="top:509px"><div class="cb"></div><svg class="ic" viewBox="302 366 1188 1188" preserveAspectRatio="none" style="left:65.90px;top:18.80px;width:10.20px;height:9.40px"><path fill="#c4121c" d="M1490 1322q0 40-28 68l-136 136q-28 28-68 28t-68-28l-294-294-294 294q-28 28-68 28t-68-28l-136-136q-28-28-28-68t28-68l294-294-294-294q-28-28-28-68t28-68l136-136q28-28 68-28t68 28l294 294 294-294q28-28 68-28t68 28l136 136q28 28 28 68t-28 68l-294 294 294 294q28 28 28 68z"/></svg>
<div class="td" style="left:154px"><span id="t86" style="letter-spacing:0.247px">crisp-client/session</span></div><div class="td" style="left:321px"><span id="t87" style="letter-spacing:-0.111px">Cookies nécessaires</span></div><div class="td" style="left:531px"><span id="t88" style="letter-spacing:-0.222px">Crisp Chat</span></div><div class="td" style="left:731px"><span id="t89" style="letter-spacing:-0.051px">Utilisé pour rendre le Crisp Chat cohérent lorsque vous accédez à votre site Web. Sans ce cookie, le...</span></div><div class="td" style="left:1323px"><span id="t90" style="letter-spacing:0.200px">6 mois</span></div>
<div class="bmod"><svg class="ic" viewBox="128 149 1515 1515" preserveAspectRatio="none" style="left:15.75px;top:11.60px;width:12.25px;height:12.50px"><path fill="#1d1d1b" d="M491 1536l91-91-235-235-91 91v107h128v128h107zm523-928q0-22-22-22-10 0-17 7l-542 542q-7 7-7 17 0 22 22 22 10 0 17-7l542-542q7-7 7-17zm-54-192l416 416-832 832h-416v-416zm683 96q0 53-37 90l-166 166-416-416 166-165q36-38 90-38 53 0 91 38l235 234q37 39 37 91z"/></svg><span><span id="t91" style="letter-spacing:-0.343px">Modifier</span></span><div class="bdiv"></div><svg class="ic" viewBox="384 640 1024 576" preserveAspectRatio="none" style="left:112.60px;top:16.00px;width:8.40px;height:4.40px"><path fill="#1d1d1b" d="M1408 704q0 26-19 45l-448 448q-19 19-45 19t-45-19l-448-448q-19-19-19-45t19-45 45-19h896q26 0 45 19t19 45z"/></svg></div></div><div class="row" style="top:556px"><div class="cb"></div><svg class="ic" viewBox="302 366 1188 1188" preserveAspectRatio="none" style="left:65.90px;top:18.80px;width:10.20px;height:9.40px"><path fill="#c4121c" d="M1490 1322q0 40-28 68l-136 136q-28 28-68 28t-68-28l-294-294-294 294q-28 28-68 28t-68-28l-136-136q-28-28-28-68t28-68l294-294-294-294q-28-28-28-68t28-68l136-136q28-28 68-28t68 28l294 294 294-294q28-28 68-28t68 28l136 136q28 28 28 68t-28 68l-294 294 294 294q28 28 28 68z"/></svg>
<div class="td" style="left:154px"><span id="t92" style="letter-spacing:-0.400px">DEVICE_INFO</span></div><div class="td" style="left:321px"><span id="t93" style="letter-spacing:-0.048px">Cookies de préférences</span></div><div class="td" style="left:531px"><span id="t94">youtube.com</span></div><div class="td" style="left:731px"><span id="t95" style="letter-spacing:0.116px">Utilisé pour suivre l'interaction de l'utilisateur avec le contenu intégré.</span></div><div class="td" style="left:1323px"><span id="t96" style="letter-spacing:0.250px">180 jours</span></div>
<div class="bmod"><svg class="ic" viewBox="128 149 1515 1515" preserveAspectRatio="none" style="left:15.75px;top:11.60px;width:12.25px;height:12.50px"><path fill="#1d1d1b" d="M491 1536l91-91-235-235-91 91v107h128v128h107zm523-928q0-22-22-22-10 0-17 7l-542 542q-7 7-7 17 0 22 22 22 10 0 17-7l542-542q7-7 7-17zm-54-192l416 416-832 832h-416v-416zm683 96q0 53-37 90l-166 166-416-416 166-165q36-38 90-38 53 0 91 38l235 234q37 39 37 91z"/></svg><span><span id="t97" style="letter-spacing:-0.343px">Modifier</span></span><div class="bdiv"></div><svg class="ic" viewBox="384 640 1024 576" preserveAspectRatio="none" style="left:112.60px;top:16.00px;width:8.40px;height:4.40px"><path fill="#1d1d1b" d="M1408 704q0 26-19 45l-448 448q-19 19-45 19t-45-19l-448-448q-19-19-19-45t19-45 45-19h896q26 0 45 19t19 45z"/></svg></div></div><div class="row" style="top:603px"><div class="cb"></div><svg class="ic" viewBox="121 334 1550 1188" preserveAspectRatio="none" style="left:64.60px;top:18.20px;width:12.70px;height:9.90px"><path fill="#18824f" d="M1671 566q0 40-28 68l-724 724-136 136q-28 28-68 28t-68-28l-136-136-362-362q-28-28-28-68t28-68l136-136q28-28 68-28t68 28l294 295 656-657q28-28 68-28t68 28l136 136q28 28 28 68z"/></svg>
<div class="td" style="left:154px"><span id="t98" style="letter-spacing:-0.800px">fr</span></div><div class="td" style="left:321px"><span id="t99" style="letter-spacing:0.081px">Cookies marketing</span></div><div class="td" style="left:531px"><span id="t100" style="letter-spacing:-0.186px">Facebook</span></div><div class="td" style="left:731px"><span id="t101" style="letter-spacing:0.066px">Utilisé par Facebook pour fournir une série de produits publicitaires tels que les offres en temps r...</span></div><div class="td" style="left:1323px"><span id="t102" style="letter-spacing:0.200px">3 mois</span></div>
<div class="bmod"><svg class="ic" viewBox="128 149 1515 1515" preserveAspectRatio="none" style="left:15.75px;top:11.60px;width:12.25px;height:12.50px"><path fill="#1d1d1b" d="M491 1536l91-91-235-235-91 91v107h128v128h107zm523-928q0-22-22-22-10 0-17 7l-542 542q-7 7-7 17 0 22 22 22 10 0 17-7l542-542q7-7 7-17zm-54-192l416 416-832 832h-416v-416zm683 96q0 53-37 90l-166 166-416-416 166-165q36-38 90-38 53 0 91 38l235 234q37 39 37 91z"/></svg><span><span id="t103" style="letter-spacing:-0.343px">Modifier</span></span><div class="bdiv"></div><svg class="ic" viewBox="384 640 1024 576" preserveAspectRatio="none" style="left:112.60px;top:16.00px;width:8.40px;height:4.40px"><path fill="#1d1d1b" d="M1408 704q0 26-19 45l-448 448q-19 19-45 19t-45-19l-448-448q-19-19-19-45t19-45 45-19h896q26 0 45 19t19 45z"/></svg></div></div><div class="row" style="top:650px"><div class="cb"></div><svg class="ic" viewBox="302 366 1188 1188" preserveAspectRatio="none" style="left:65.90px;top:18.80px;width:10.20px;height:9.40px"><path fill="#c4121c" d="M1490 1322q0 40-28 68l-136 136q-28 28-68 28t-68-28l-294-294-294 294q-28 28-68 28t-68-28l-136-136q-28-28-28-68t28-68l294-294-294-294q-28-28-28-68t28-68l136-136q28-28 68-28t68 28l294 294 294-294q28-28 68-28t68 28l136 136q28 28 28 68t-28 68l-294 294 294 294q28 28 28 68z"/></svg>
<div class="td" style="left:154px"><span id="t104" style="letter-spacing:-0.500px">IDE</span></div><div class="td" style="left:321px"><span id="t105" style="letter-spacing:0.081px">Cookies marketing</span></div><div class="td" style="left:531px"><span id="t106" style="letter-spacing:0.143px">doubleclick.net</span></div><div class="td" style="left:731px"><span id="t107" style="letter-spacing:0.059px">Utilisé par Google DoubleClick pour enregistrer et signaler les actions de l'utilisateur du site apr...</span></div><div class="td" style="left:1323px"><span id="t108" style="letter-spacing:-0.167px">1 année</span></div>
<div class="bmod"><svg class="ic" viewBox="128 149 1515 1515" preserveAspectRatio="none" style="left:15.75px;top:11.60px;width:12.25px;height:12.50px"><path fill="#1d1d1b" d="M491 1536l91-91-235-235-91 91v107h128v128h107zm523-928q0-22-22-22-10 0-17 7l-542 542q-7 7-7 17 0 22 22 22 10 0 17-7l542-542q7-7 7-17zm-54-192l416 416-832 832h-416v-416zm683 96q0 53-37 90l-166 166-416-416 166-165q36-38 90-38 53 0 91 38l235 234q37 39 37 91z"/></svg><span><span id="t109" style="letter-spacing:-0.343px">Modifier</span></span><div class="bdiv"></div><svg class="ic" viewBox="384 640 1024 576" preserveAspectRatio="none" style="left:112.60px;top:16.00px;width:8.40px;height:4.40px"><path fill="#1d1d1b" d="M1408 704q0 26-19 45l-448 448q-19 19-45 19t-45-19l-448-448q-19-19-19-45t19-45 45-19h896q26 0 45 19t19 45z"/></svg></div></div><div class="row" style="top:697px"><div class="cb"></div><svg class="ic" viewBox="302 366 1188 1188" preserveAspectRatio="none" style="left:65.90px;top:18.80px;width:10.20px;height:9.40px"><path fill="#c4121c" d="M1490 1322q0 40-28 68l-136 136q-28 28-68 28t-68-28l-294-294-294 294q-28 28-68 28t-68-28l-136-136q-28-28-28-68t28-68l294-294-294-294q-28-28-28-68t28-68l136-136q28-28 68-28t68 28l294 294 294-294q28-28 68-28t68 28l136 136q28 28 28 68t-28 68l-294 294 294 294q28 28 28 68z"/></svg>
<div class="td" style="left:154px"><span id="t110" style="letter-spacing:0.133px">kk_leadtag</span></div><div class="td" style="left:321px"><span id="t111" style="letter-spacing:0.081px">Cookies marketing</span></div><div class="td" style="left:531px"><span id="t112" style="letter-spacing:-0.200px">Kelkoo</span></div><div class="td" style="left:731px"><span id="t113" style="letter-spacing:0.048px">Comparaison des prix des produits.</span></div><div class="td" style="left:1323px"><span id="t114" style="letter-spacing:-0.167px">1 année</span></div>
<div class="bmod"><svg class="ic" viewBox="128 149 1515 1515" preserveAspectRatio="none" style="left:15.75px;top:11.60px;width:12.25px;height:12.50px"><path fill="#1d1d1b" d="M491 1536l91-91-235-235-91 91v107h128v128h107zm523-928q0-22-22-22-10 0-17 7l-542 542q-7 7-7 17 0 22 22 22 10 0 17-7l542-542q7-7 7-17zm-54-192l416 416-832 832h-416v-416zm683 96q0 53-37 90l-166 166-416-416 166-165q36-38 90-38 53 0 91 38l235 234q37 39 37 91z"/></svg><span><span id="t115" style="letter-spacing:-0.343px">Modifier</span></span><div class="bdiv"></div><svg class="ic" viewBox="384 640 1024 576" preserveAspectRatio="none" style="left:112.60px;top:16.00px;width:8.40px;height:4.40px"><path fill="#1d1d1b" d="M1408 704q0 26-19 45l-448 448q-19 19-45 19t-45-19l-448-448q-19-19-19-45t19-45 45-19h896q26 0 45 19t19 45z"/></svg></div></div><div class="row" style="top:744px"><div class="cb"></div><svg class="ic" viewBox="302 366 1188 1188" preserveAspectRatio="none" style="left:65.90px;top:18.80px;width:10.20px;height:9.40px"><path fill="#c4121c" d="M1490 1322q0 40-28 68l-136 136q-28 28-68 28t-68-28l-294-294-294 294q-28 28-68 28t-68-28l-136-136q-28-28-28-68t28-68l294-294-294-294q-28-28-28-68t28-68l136-136q28-28 68-28t68 28l294 294 294-294q28-28 68-28t68 28l136 136q28 28 28 68t-28 68l-294 294 294 294q28 28 28 68z"/></svg>
<div class="td" style="left:154px"><span id="t116">laravel_session</span></div><div class="td" style="left:321px"><span id="t117" style="letter-spacing:-0.111px">Cookies nécessaires</span></div><div class="td" style="left:531px"><span id="t118" style="letter-spacing:0.267px">https://www.marmonier-design.fr</span></div><div class="td" style="left:731px"><span id="t119">Utilisé pour identifier une instance de session pour l'utilisateur.</span></div><div class="td" style="left:1323px"><span id="t120" style="letter-spacing:-0.167px">1 année</span></div>
<div class="bmod"><svg class="ic" viewBox="128 149 1515 1515" preserveAspectRatio="none" style="left:15.75px;top:11.60px;width:12.25px;height:12.50px"><path fill="#1d1d1b" d="M491 1536l91-91-235-235-91 91v107h128v128h107zm523-928q0-22-22-22-10 0-17 7l-542 542q-7 7-7 17 0 22 22 22 10 0 17-7l542-542q7-7 7-17zm-54-192l416 416-832 832h-416v-416zm683 96q0 53-37 90l-166 166-416-416 166-165q36-38 90-38 53 0 91 38l235 234q37 39 37 91z"/></svg><span><span id="t121" style="letter-spacing:-0.343px">Modifier</span></span><div class="bdiv"></div><svg class="ic" viewBox="384 640 1024 576" preserveAspectRatio="none" style="left:112.60px;top:16.00px;width:8.40px;height:4.40px"><path fill="#1d1d1b" d="M1408 704q0 26-19 45l-448 448q-19 19-45 19t-45-19l-448-448q-19-19-19-45t19-45 45-19h896q26 0 45 19t19 45z"/></svg></div></div></div>
</body></html>
